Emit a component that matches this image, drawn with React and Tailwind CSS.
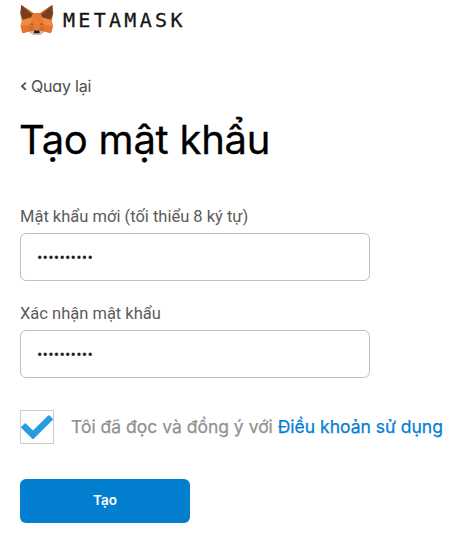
import React, { useState } from 'react';

const FoxLogo = () => (
  <svg width="34" height="32" viewBox="0 0 34 32" className="shrink-0">
    <path d="M1.2 1L13 9H20.5L32.3 1L33.3 9.5L31.8 17L33 22L30.9 29.3L24.5 27.5L20 31H13.5L9 27.5L2.6 29.3L0.5 22L1.7 17L0.2 9.5Z" fill="#e97c31" />
    <path d="M1.2 1L13 9L11 13.5L2.6 15.4L0.6 9.5Z" fill="#743f22" />
    <path d="M32.3 1L20.5 9L22.5 13.5L30.9 15.4L32.9 9.5Z" fill="#743f22" />
    <path d="M1.2 1L13.2 9L11.9 9.9Z" fill="#e2761b" />
    <path d="M32.3 1L20.3 9L21.6 9.9Z" fill="#e2761b" />
    <path d="M2 17L11 13.5L10.5 20L0.6 22Z" fill="#f18b40" />
    <path d="M31.5 17L22.5 13.5L23 20L32.9 22Z" fill="#f18b40" />
    <path d="M0.6 22H9.5L9 27.5L2.6 29.3Z" fill="#e6752a" />
    <path d="M32.9 22H24L24.5 27.5L30.9 29.3Z" fill="#e6752a" />
    <path d="M9.5 22L14.5 23L13.8 27.5L9 27.5Z" fill="#d36b2b" />
    <path d="M24 22L19 23L19.7 27.5L24.5 27.5Z" fill="#d36b2b" />
    <path d="M9.5 20.3L12.5 19.1L13.5 21.4Z" fill="#8c5c40" />
    <path d="M24 20.3L21 19.1L20 21.4Z" fill="#8c5c40" />
    <path d="M9 27.5L13.8 26.7H19.7L24.5 27.5L20 31H13.5Z" fill="#cbbeb4" />
    <path d="M14.2 26.4H19.3L19.8 29.3H13.7Z" fill="#241d1b" />
  </svg>
);

const PasswordField = ({ id, label, value, onChange }) => (
  <div className="flex flex-col">
    <label htmlFor={id} className="h-6 whitespace-nowrap font-['Roboto',sans-serif] text-[16.5px] leading-[26px] text-[#5b5b5b]">
      {label}
    </label>
    <input
      id={id}
      type="password"
      value={value}
      onChange={(e) => onChange(e.target.value)}
      className="mt-[5px] h-12 w-[350px] rounded-md border border-[#bbc0c5] bg-white px-4 font-['Roboto',sans-serif] text-base tracking-[0.2px] text-[#222] outline-none"
    />
  </div>
);

const App = () => {
  const [password, setPassword] = useState('matkhau123');
  const [confirm, setConfirm] = useState('matkhau123');
  const [agreed, setAgreed] = useState(true);

  return (
    <div className="h-[536px] w-[458px] overflow-hidden bg-white pl-5 pt-1 font-['Inter',sans-serif] text-black">
      <header className="flex h-8 items-center gap-[9px]">
        <FoxLogo />
        <span className="font-['DejaVu_Sans_Mono',monospace] text-[20px] leading-8 tracking-[3.3px] text-[#161616] [-webkit-text-stroke:0.3px_#161616]">
          METAMASK
        </span>
      </header>

      <button className="mt-[38px] flex h-6 items-center gap-1 text-base tracking-[-0.2px] text-[#4d4d4d]">
        <svg width="7" height="10" viewBox="0 0 7 10" fill="none" stroke="currentColor" strokeWidth="1.8">
          <path d="M5.8 1.6L2 5.2L5.8 8.8" />
        </svg>
        <span>
          <span className="[font-feature-settings:'cv11']">Quay</span> lại
        </span>
      </button>

      <h1 className="-ml-px mt-4 h-[60px] whitespace-nowrap text-[40px] leading-[52px] tracking-[-0.25px] [-webkit-text-stroke:0.3px_#000]">
        Tạo mật khẩu
      </h1>

      <form className="mt-[30px]" onSubmit={(e) => e.preventDefault()}>
        <div className="flex flex-col gap-5">
          <PasswordField id="password" label="Mật khẩu mới (tối thiểu 8 ký tự)" value={password} onChange={setPassword} />
          <PasswordField id="confirm" label="Xác nhận mật khẩu" value={confirm} onChange={setConfirm} />
        </div>

        <div className="mt-8 flex h-[34px] items-center">
          <button
            type="button"
            role="checkbox"
            aria-checked={agreed}
            onClick={() => setAgreed(!agreed)}
            className="flex size-[34px] items-center justify-center border border-[#cdcdcd] bg-white"
          >
            {agreed && (
              <svg width="32" height="32" viewBox="0 0 32 32" fill="#259de0" className="shrink-0">
                <path d="M0.2 15.8L3.6 12.4Q4.2 12 4.8 12.5L12 19.5L27.2 4.5Q28 4 28.7 4.6L31.7 7.7Q32.2 8.4 31.6 9L13 27.4Q12 28.4 11 27.4L0.3 17Q-0.2 16.4 0.2 15.8Z" />
              </svg>
            )}
          </button>
          <span className="ml-[17px] whitespace-nowrap text-[17.5px] text-[#939090] [-webkit-text-stroke:0.25px_currentColor]">
            Tôi đã đọc và đồng ý với <a className="text-[#037dd6]">Điều khoản sử dụng</a>
          </span>
        </div>

        <button className="mt-[35px] flex h-11 w-[170px] items-center justify-center rounded-md bg-[#037fcf] pb-0.5 text-[13.5px] font-semibold text-white">
          Tạo
        </button>
      </form>
    </div>
  );
};

export default App;
